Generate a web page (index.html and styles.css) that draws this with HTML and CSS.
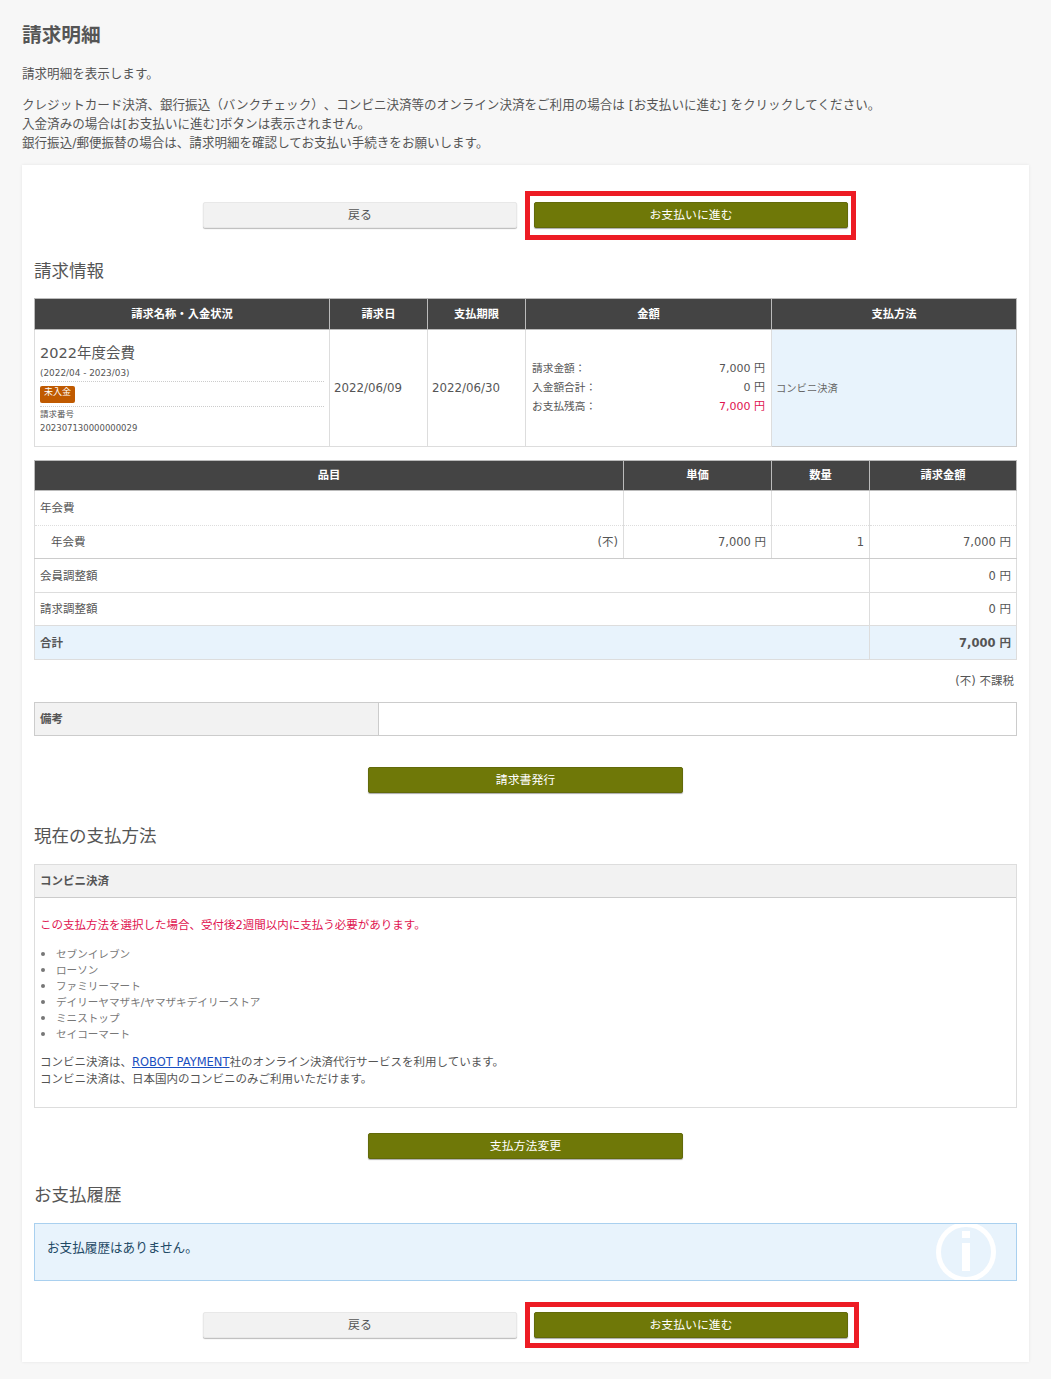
FILE: index.html
```html
<!DOCTYPE html>
<html lang="ja">
<head>
  <meta charset="UTF-8" />
  <meta name="viewport" content="width=device-width, initial-scale=1" />
  <title>請求明細</title>
  <link rel="stylesheet" href="styles.css">
</head>
<body>
  <h1>請求明細</h1>
  <p class="lead">請求明細を表示します。</p>
  <p class="intro">クレジットカード決済、銀行振込（バンクチェック）、コンビニ決済等のオンライン決済をご利用の場合は [お支払いに進む] をクリックしてください。<br>
    入金済みの場合は[お支払いに進む]ボタンは表示されません。<br>
    銀行振込/郵便振替の場合は、請求明細を確認してお支払い手続きをお願いします。</p>

  <div class="card">
    <div class="actions">
      <a class="btn btn-plain">戻る</a>
      <a class="btn btn-main">お支払いに進む<span class="mark"></span></a>
    </div>

    <h2 class="h-info">請求情報</h2>
    <table class="tbl tbl-invoice">
      <colgroup><col class="c295"><col class="c98"><col class="c98"><col class="c246"><col></colgroup>
      <tr>
        <th>請求名称・入金状況</th>
        <th>請求日</th>
        <th>支払期限</th>
        <th>金額</th>
        <th>支払方法</th>
      </tr>
      <tr class="invoice-row">
        <td class="inv-name">
          <div class="inv-title">2022年度会費</div>
          <div class="inv-period">(2022/04 - 2023/03)</div>
          <div class="inv-status"><span class="badge">未入金</span></div>
          <div class="inv-no">請求番号<br>202307130000000029</div>
        </td>
        <td class="date">2022/06/09</td>
        <td class="date">2022/06/30</td>
        <td class="amounts">
          <div class="amount"><span>請求金額：</span><b>7,000 円</b></div>
          <div class="amount"><span>入金額合計：</span><b>0 円</b></div>
          <div class="amount"><span>お支払残高：</span><b class="red">7,000 円</b></div>
        </td>
        <td class="method">コンビニ決済</td>
      </tr>
    </table>

    <table class="tbl tbl-items">
      <colgroup><col class="c589"><col class="c148"><col class="c98"><col></colgroup>
      <tr>
        <th>品目</th>
        <th>単価</th>
        <th>数量</th>
        <th>請求金額</th>
      </tr>
      <tr class="row-group">
        <td>年会費</td>
        <td></td>
        <td></td>
        <td></td>
      </tr>
      <tr class="row-item">
        <td><div class="item-name"><span class="indent">年会費</span><span>(不)</span></div></td>
        <td class="num">7,000 円</td>
        <td class="num">1</td>
        <td class="num">7,000 円</td>
      </tr>
      <tr class="row">
        <td colspan="3">会員調整額</td>
        <td class="num">0 円</td>
      </tr>
      <tr class="row row-short">
        <td colspan="3">請求調整額</td>
        <td class="num">0 円</td>
      </tr>
      <tr class="row row-total">
        <td colspan="3">合計</td>
        <td class="num">7,000 円</td>
      </tr>
    </table>
    <p class="tax-note">(不) 不課税</p>

    <table class="tbl tbl-note">
      <colgroup><col class="c344"><col></colgroup>
      <tr>
        <td class="note-label">備考</td>
        <td></td>
      </tr>
    </table>

    <div class="actions actions-issue">
      <a class="btn btn-main">請求書発行</a>
    </div>

    <h2 class="h-method">現在の支払方法</h2>
    <div class="method-box">
      <div class="method-head">コンビニ決済</div>
      <div class="method-body">
        <p class="red">この支払方法を選択した場合、受付後2週間以内に支払う必要があります。</p>
        <ul>
          <li>セブンイレブン</li>
          <li>ローソン</li>
          <li>ファミリーマート</li>
          <li>デイリーヤマザキ/ヤマザキデイリーストア</li>
          <li>ミニストップ</li>
          <li>セイコーマート</li>
        </ul>
        <p class="method-text">コンビニ決済は、<a href="#">ROBOT PAYMENT</a>社のオンライン決済代行サービスを利用しています。<br>
          コンビニ決済は、日本国内のコンビニのみご利用いただけます。</p>
      </div>
    </div>

    <div class="actions actions-change">
      <a class="btn btn-main">支払方法変更</a>
    </div>

    <h2 class="h-history">お支払履歴</h2>
    <div class="info">
      お支払履歴はありません。
      <svg class="info-icon" width="64" height="64" viewBox="0 0 64 64" aria-hidden="true">
        <circle cx="32" cy="32" r="27.5" fill="none" stroke="#fff" stroke-width="5"/>
        <rect x="28" y="11" width="8" height="7" fill="#fff"/>
        <rect x="28" y="23" width="8" height="28" fill="#fff"/>
      </svg>
    </div>

    <div class="actions actions-bottom">
      <a class="btn btn-plain">戻る</a>
      <a class="btn btn-main">お支払いに進む<span class="mark mark-wide"></span></a>
    </div>
  </div>
</body>
</html>
```

FILE: styles.css
```css
/* Reset & base */
* {
  box-sizing: border-box;
}
body {
  margin: 0;
  padding: 24px 22px 17px;
  background: #f7f7f7;
  color: #555;
  font-family: "DejaVu Sans", "Noto Sans CJK JP", sans-serif;
  font-size: 11.5px;
  line-height: 19px;
  text-spacing-trim: space-all;
}
p {
  margin: 0;
}
h1 {
  margin: 0 0 16px;
  font-size: 19.7px;
  font-weight: 700;
  line-height: 24px;
  color: #555;
}
h2 {
  margin: 0;
  font-size: 17.5px;
  font-weight: 400;
  line-height: 24px;
  color: #555;
}
.lead,
.intro {
  font-size: 12.55px;
}
.lead {
  margin-bottom: 12px;
}
.intro {
  margin-bottom: 13px;
}
.red {
  color: #e0134f;
}

/* Card */
.card {
  background: #fff;
  padding: 37px 12px 23px;
  box-shadow: 0 0 3px rgba(0, 0, 0, 0.08);
}

/* Buttons */
.actions {
  display: flex;
  justify-content: center;
  align-items: flex-start;
  gap: 17px;
  height: 27px;
}
.btn {
  position: relative;
  display: block;
  width: 314px;
  height: 26px;
  border-radius: 2px;
  text-align: center;
  line-height: 24px;
  font-size: 11.9px;
}
.actions-issue .btn,
.actions-change .btn {
  width: 315px;
}
.btn-plain {
  background: #f2f2f2;
  color: #555;
  border: 1px solid #e8e8e8;
  box-shadow: 0 1px 1px #bbb;
}
.btn-main {
  background: #6f7808;
  color: #fff;
  border: 1px solid #626a0a;
  box-shadow: 0 1px 1px #aaa;
}
.mark {
  position: absolute;
  top: -12px;
  left: -10px;
  right: -9px;
  bottom: -13px;
  border: 5px solid #ed1c24;
}
.mark-wide {
  top: -11px;
  right: -12px;
  bottom: -11px;
}

/* Tables */
.tbl {
  width: 983px;
  border-collapse: collapse;
  table-layout: fixed;
}
.tbl th {
  height: 31px;
  padding: 0 5px;
  background: #444;
  border: 1px solid #bbb;
  color: #fff;
  font-weight: 700;
  font-size: 11.3px;
  text-align: center;
}
.tbl td {
  padding: 0 5px;
  border: 1px solid #ddd;
}
.c295 { width: 295px; }
.c98 { width: 98px; }
.c246 { width: 246px; }
.c589 { width: 589px; }
.c148 { width: 148px; }
.c344 { width: 344px; }
.num {
  text-align: right;
}

/* Invoice table */
.h-info {
  margin: 30px 0 15px;
}
.invoice-row td {
  height: 117px;
}
.tbl td.inv-name {
  padding-top: 11px;
  vertical-align: top;
}
.inv-title {
  font-size: 14.5px;
  line-height: 24px;
}
.inv-period {
  margin-top: 1px;
  font-size: 8.9px;
  line-height: 15px;
  border-bottom: 1px dotted #ccc;
}
.inv-status {
  padding-top: 4px;
  height: 25px;
  line-height: 17px;
  border-bottom: 1px dotted #ccc;
}
.badge {
  display: inline-block;
  height: 17px;
  padding: 0 4px;
  background: #c05a00;
  border-radius: 2px;
  color: #fff;
  font-size: 9px;
  line-height: 13px;
  vertical-align: top;
}
.inv-no {
  font-size: 8.5px;
  line-height: 14px;
}
.tbl td.date {
  padding-left: 4px;
  font-size: 11.8px;
}
.tbl td.amounts {
  padding: 0 6px 2px;
}
.amount {
  display: flex;
  justify-content: space-between;
  font-size: 10.7px;
}
.amount b {
  font-size: 11px;
  font-weight: 400;
}
.tbl td.method {
  padding-left: 4px;
  background: #e8f3fc;
  border-color: #ccc;
  font-size: 10.3px;
  color: #666;
}

/* Items table */
.tbl-items {
  margin-top: 13px;
}
.tbl-items th {
  height: 30px;
}
.row-group td {
  height: 35px;
  border-bottom: 1px dotted #ddd;
}
.row-item td {
  height: 33px;
  border-top: 1px dotted #ddd;
  border-bottom-color: #ccc;
}
.item-name {
  display: flex;
  justify-content: space-between;
  align-items: center;
}
.indent {
  padding-left: 11px;
}
.row td {
  height: 34px;
  padding-top: 1px;
}
.row-short td {
  height: 33px;
}
.row-total td {
  background: #e8f3fc;
  font-weight: 700;
}
.tax-note {
  margin: 12px 3px 11px 0;
  text-align: right;
}

/* Note table */
.tbl-note td {
  height: 33px;
  border-color: #ccc;
}
.tbl td.note-label {
  background: #f2f2f2;
  font-weight: 700;
}

/* Payment method */
.actions-issue {
  margin-top: 31px;
}
.h-method {
  margin: 30px 0 16px;
}
.method-box {
  border: 1px solid #ddd;
  height: 244px;
}
.method-head {
  height: 33px;
  padding: 0 5px;
  background: #f2f2f2;
  border-bottom: 1px solid #ccc;
  font-weight: 700;
  line-height: 32px;
}
.method-body {
  padding: 18px 5px 0;
}
.method-body ul {
  margin: 10px 0 13px;
  padding-left: 16px;
  font-size: 10.6px;
  line-height: 16px;
  color: #777;
}
.method-body li {
  height: 16px;
}
.method-body li::marker {
  font-size: 14px;
}
.method-text {
  line-height: 17px;
}
.method-text a {
  color: #1a4fc0;
}
.actions-change {
  margin-top: 25px;
}

/* History */
.h-history {
  margin: 23px 0 16px;
}
.info {
  position: relative;
  height: 58px;
  padding: 14px 12px;
  background: #e8f3fc;
  border: 1px solid #a9d0ef;
  color: #1f4a66;
  font-size: 12.6px;
  overflow: hidden;
}
.info-icon {
  position: absolute;
  top: -4px;
  right: 18px;
}
.actions-bottom {
  margin-top: 31px;
}
```
